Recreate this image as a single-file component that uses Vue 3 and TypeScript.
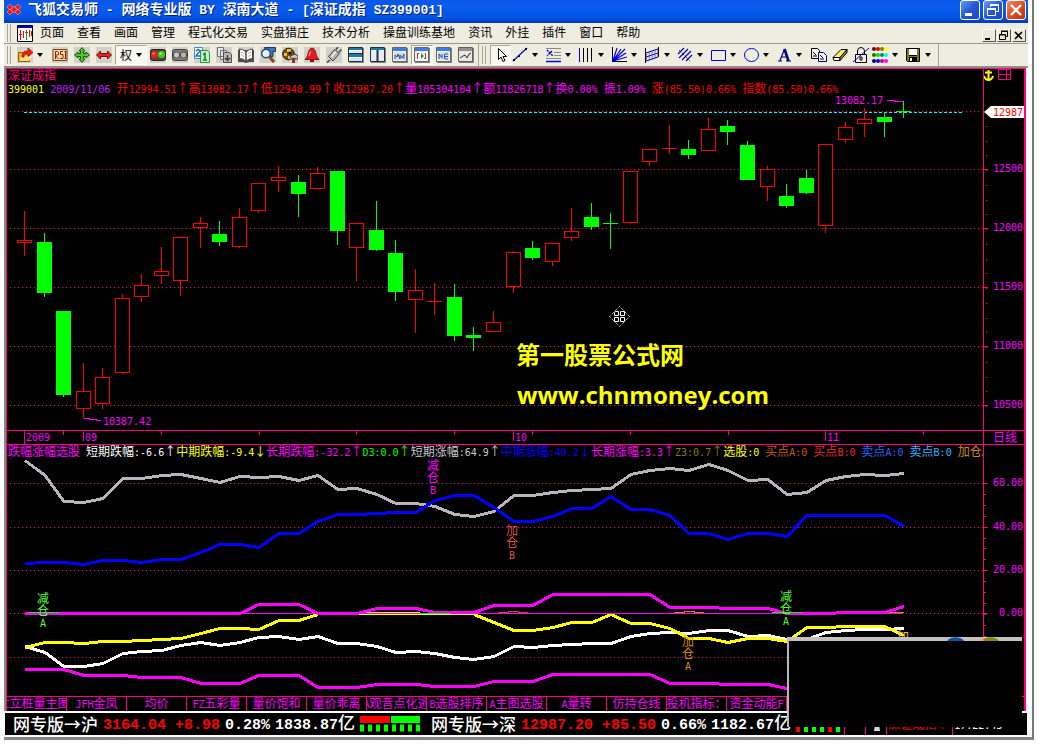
<script setup lang="ts">
import { computed, h } from 'vue'

interface Piece { text: string; color: string }
interface Candle { up: boolean; top: number; bottom: number; high: number; low: number }
interface Tool { icon: string; label: string; caret?: boolean; on?: boolean; text?: string }

/* Splits a string into Latin and Han runs so that each run gets its own font. */
const split = (s: string): string[] => s.match(/[\x20-\x7e]+|[^\x20-\x7e]+/g) ?? []
const Mix = (props: { t: string; svg?: boolean }) =>
  split(props.t).map((r) => h(props.svg ? 'tspan' : 'span', { class: /^[\x20-\x7e]/.test(r) ? 'lat' : 'han' }, r))
Mix.props = { t: String, svg: Boolean }

const menus = ['页面', '查看', '画面', '管理', '程式化交易', '实盘猎庄', '技术分析', '操盘训练基地', '资讯', '外挂', '插件', '窗口', '帮助']

const bg = '<path fill="#d3d1c9" d="M0 0h16v16H0z"/>'
const win = '<path fill="#808080" d="M1 1h15v15H1z"/><path fill="#f4f4ee" stroke="#666" d="M.5.5h14v14H.5z"/><path fill="#3a7bf0" d="M1 1h13v3H1z"/><path fill="#dcdcdc" d="M2 5h11v8H2z"/>'
const icons: Record<string, string> = {
  open: bg + '<path fill="#ffb020" stroke="#a05000" d="M1.500 14.500v-9h4l1 1h6v8z"/><path fill="#ffe080" d="M2 14l3-5h10l-3 5z"/><path fill="#f02010" stroke="#801000" stroke-width=".7" d="M5 10c0-5 2-6 6-6V1l5 4.500-5 4V7c-3 0-4 0-4 3z"/>',
  rsi: bg + '<path fill="#f6d9b4" stroke="#8a3c10" d="M1 2.500h14v11H1z"/><path fill="none" stroke="#7a2800" d="M3.500 12V4.500h2l1 1v2l-3 1 3 3.500M11 4.500H8.500v3H11v4H8M12.500 4.500h2m-1 0v7m-1 0h2"/>',
  move: bg + '<path fill="#50c828" stroke="#145008" d="M8 .6l3 3.400H9.500v2.500H12V5l3.500 3-3.500 3V9.500H9.500V12H11l-3 3.500L5 12h1.500V9.500H4V11L.5 8 4 5v1.500h2.500V4H5z"/>',
  wide: bg + '<path fill="#f02010" stroke="#701008" d="M.5 8l4-4v2.500h7V4l4 4-4 4V9.500h-7V12z"/>',
  light: bg + '<rect x=".5" y="2.500" width="15" height="11" rx="2" fill="#504838" stroke="#28201c"/><circle cx="4.500" cy="7.500" r="3.500" fill="#e82020"/><circle cx="11.500" cy="7.500" r="3.500" fill="#40d020"/><circle cx="3.500" cy="6.500" r="1" fill="#ffa0a0"/><circle cx="10.500" cy="6.500" r="1" fill="#c8ffb0"/>',
  dark: bg + '<rect x=".5" y="2.500" width="15" height="11" rx="2" fill="#808080" stroke="#404040"/><circle cx="4.500" cy="8" r="3.200" fill="#c4c4c4" stroke="#484848"/><circle cx="11.500" cy="8" r="3.200" fill="#b4b4b4" stroke="#484848"/>',
  pages: bg + '<path fill="#fff" stroke="#3890d8" d="M.5.5h8v11h-8z"/><path fill="none" stroke="#1870c8" stroke-width="1.500" d="M2 4l2-1.500L6 4 2 9h4"/><path fill="#c8f0c0" stroke="#209848" d="M6.500 3.500h7l2 2v10h-9z"/><path stroke="#108038" stroke-width="1.500" fill="none" d="M9 7.500l2-1v6M9 13h4"/>',
  stack: bg + '<path fill="#e8e8e8" stroke="#707070" d="M1.500.5h6v9h-6zM4.500 3.500h6v9h-6z"/><path fill="#b8b8b8" stroke="#505050" d="M7.500 5.500h6l2 2v8h-8z"/><path fill="none" stroke="#404040" stroke-width="1.500" d="M11.500 8v5M9 11l2.500 2.500L14 11"/>',
  book: bg + '<path fill="#505050" d="M0 3v12h5l3 1 3-1h5V3z"/><path fill="#fff" stroke="#484848" d="M1.500 2l3 .5L8 5v9l-3.500-2-3-.5zM14.500 2l-3 .5L8 5v9l3.500-2 3-.5z"/><path stroke="#b0b0b0" d="M3 5l3 1.500M3 8l3 1.500M13 5l-3 1.500M13 8l-3 1.500"/>',
  find: bg + '<path fill="#3878c8" stroke="#183860" d="M4.500.5h11v4H13v5H8z"/><circle cx="6" cy="6.500" r="4.300" fill="#dff4ff" stroke="#28485c" stroke-width="1.400"/><path stroke="#8c4818" stroke-width="3" d="M9.500 10l4.500 5"/>',
  camera: bg + '<circle cx="6.500" cy="7" r="5.800" fill="#70501c" stroke="#281400"/><path fill="#e8c038" d="M5 2h4v3H5zM2 6h3v3H2zM6 9h4v3H6z"/><circle cx="8" cy="6" r="1.500" fill="#201000"/><path fill="#c8c8c8" stroke="#404040" d="M8 9l5-2 3 2v3h-3v-1l-3 1z"/><path fill="#a02818" d="M10 12h3v4h-3z"/>',
  bell: bg + '<path fill="#e81c1c" stroke="#801010" d="M8 1c4 1 3.500 6 5 9l2 2.500H1L3 10C4.500 7 4 2 8 1z"/><path fill="#801010" d="M6 13h4v2H6z"/><path stroke="#ff9090" stroke-width="1.300" d="M6.500 4L5 9"/>',
  plug: bg + '<path fill="#b4b4b4" stroke="#404040" d="M2.500 9.500l6-7 5 4-6.500 7.500z"/><path fill="#e8e8e8" d="M5 9l4-5 1.500 1L6 11z"/><path stroke="#404040" stroke-width="1.500" d="M10 2.500L12 0M13 5l2.500-2.500M4 13l-3 2.500" fill="none"/>',
  rows: '<path fill="#888" d="M1 1h15v15H1z"/><path fill="#fff" stroke="#203040" d="M.5.5h14v14H.5z"/><path fill="#2078a0" d="M1 1h13v2H1zM1 7h13v3H1z"/><path stroke="#203040" d="M1 6.500h13"/><path fill="#d0e8f0" d="M2 4h11v2H2zM2 11h11v3H2z"/>',
  cols: '<path fill="#888" d="M1 1h15v15H1z"/><path fill="#e4eef2" stroke="#203040" d="M.5.5h14v14H.5z"/><path fill="#2078a0" d="M1 1h13v2H1z"/><path stroke="#203040" stroke-width="2" d="M7.500 3v11"/>',
  win1: win + '<path fill="none" stroke="#1858b0" d="M3 12V8l2 2 1-3 2 5V8l2 3 2-4v5"/>',
  win2: win + '<path fill="#fff" d="M2 5h11v8H2z"/><path fill="none" stroke="#e02020" d="M3.500 6v6M11.500 6v6M5 6.500H3M10 11.500h2"/><path fill="#20a020" d="M7 6l3 3-3 3z"/>',
  win3: win + '<path fill="none" stroke="#1858b0" d="M3 12V7l3 4V7M9 7h3M9 9.500h3M9 12h3M8.500 7v5"/>',
  win4: '<path fill="#808080" d="M1 1h15v15H1z"/><path fill="#e8e8e0" stroke="#606060" d="M.5.5h14v14H.5z"/><path fill="#909090" d="M1 1h13v3H1z"/><path fill="none" stroke="#303030" d="M2 11l3-2 2-1 2 3 2-4 2-1"/>',
  arrow: '<path fill="#fff" stroke="#000" d="M5.500 1.500v11l2.500-2.500 2 4.500 2-1-2-4h3.500z"/>',
  line: '<path stroke="#0000e0" stroke-width="1.200" d="M1 14L15 1"/><path d="M1 12h2v2H1zM6 8h2v2H6zM13 1h2v2h-2z"/>',
  fib: '<path stroke="#0000e0" stroke-width="1.500" d="M1 14.500h15"/><path stroke="#888" d="M1 1.500h15M9 5.500h7M9 8.500h7M1 11.500h15"/><path stroke="#0000e0" stroke-width="1.500" stroke-dasharray="2 1" d="M2 3l6 6M7 4L2 9"/>',
  bars: '<path stroke="#0000e0" d="M1.500 1v14"/><path stroke="#000" d="M5.500 1v14M9.500 1v14M13.500 1v14"/>',
  fan: '<path stroke="#000" d="M1.500 0v15M1 14.500h15" /><path stroke="#0000e0" stroke-width="1.200" d="M2 14L6 1M2 14l8-12M2 14L14 2M2 14l13-8M2 14l14-4"/><path fill="#0000a0" d="M1 10l5 5H1z"/>',
  chan: '<path stroke="#000" d="M1.500 1v15M14.500 0v10"/><path stroke="#0000c0" stroke-width="1.200" d="M2 6l12-4M2 10l12-4M2 14l12-4"/><path stroke="#000" stroke-dasharray="1 2" d="M2 8l12-4M2 12l12-4"/>',
  hatch: '<path stroke="#0000c0" stroke-width="1.200" d="M1 7l6-6M2 11l9-9M5 13l9-9M9 14l6-6"/><path stroke="#000" d="M2 3l11 11" stroke-dasharray="1 1"/>',
  rect: '<path fill="none" stroke="#0000e0" d="M1.500 3.500h14v10h-14z"/>',
  oval: '<ellipse cx="8.500" cy="8" rx="7" ry="6.500" fill="none" stroke="#0000e0"/>',
  font: '<path fill="none" stroke="#000080" stroke-width="1.200" d="M2 14h4M10 14h5M4 13.500L8.500 2M5.500 10h5"/><path stroke="#000080" stroke-width="2.600" d="M8.500 2L12.500 14"/>',
  copy: '<path fill="#f4f2e4" stroke="#000" d="M.5 1.500h6l2 2v8h-8z"/><path fill="#f4f2e4" stroke="#000080" d="M7.500 5.500h5l3 3v6h-8z"/><path stroke="#000" d="M2 5l3 3M2 9h4M9 8l3 3M9 12h4"/>',
  erase: '<path fill="#f4f060" stroke="#000" d="M1 10.500L9 2.500h6l-7 8z"/><path fill="#fff" stroke="#000" d="M1 10.500h7v3H2z"/><path fill="#a09020" stroke="#000" d="M8 10.500l7-8v3l-7 8z"/>',
  lock: '<path fill="none" stroke="#000" d="M4.500 7V4a3.500 3.500 0 0 1 7 0v3M2.500 7.500h11v8h-11zM7 10h2v3H7z"/><path stroke="#0000c0" d="M0 15L16 1"/>',
  colors: [['#800000', '#e00000', '#808000', '#ffff00'], ['#008000', '#00e000', '#008080', '#00ffff'], ['#000080', '#0000ff', '#c00080', '#ff00ff']]
    .map((row, y) => row.map((c, x) => `<circle cx="${2 + x * 4}" cy="${2 + y * 6}" r="2" fill="${c}"/>`).join('')).join(''),
  save: '<path fill="#808000" stroke="#000" d="M1.500 1.500h13v13h-12l-1-1z"/><path fill="#fff" d="M4 2h8v6H4z"/><path d="M4 10h8v5H4z"/><path fill="#fff" d="M5 11h2v3H5z"/><path stroke="#000" d="M4 8.500h8"/>',
}

const mainTools: Tool[] = [
  { icon: 'open', label: '打开', caret: true }, { icon: 'rsi', label: '指标' }, { icon: 'move', label: '移动' }, { icon: 'wide', label: '伸缩' },
  { icon: '', label: '复权', text: '权', caret: true, on: true }, { icon: 'light', label: '红绿灯' }, { icon: 'dark', label: '停用' },
  { icon: 'pages', label: '翻页' }, { icon: 'stack', label: '叠加' }, { icon: 'book', label: '资料' }, { icon: 'find', label: '查找' },
  { icon: 'camera', label: '选股' }, { icon: 'bell', label: '预警' }, { icon: 'plug', label: '连接' }, { icon: 'rows', label: '横排' },
  { icon: 'cols', label: '竖排' }, { icon: 'win1', label: '分时' }, { icon: 'win2', label: '日线图', on: true }, { icon: 'win3', label: '报价' }, { icon: 'win4', label: '走势' },
]
const drawTools: Tool[] = [
  { icon: 'arrow', label: '选择', on: true }, { icon: 'line', label: '线段', caret: true }, { icon: 'fib', label: '黄金分割', caret: true },
  { icon: 'bars', label: '周期线', caret: true }, { icon: 'fan', label: '扇形线', caret: true }, { icon: 'chan', label: '通道', caret: true },
  { icon: 'hatch', label: '平行线', caret: true }, { icon: 'rect', label: '矩形', caret: true }, { icon: 'oval', label: '椭圆', caret: true },
  { icon: 'font', label: '文字', caret: true }, { icon: 'copy', label: '复制' }, { icon: 'erase', label: '擦除' }, { icon: 'lock', label: '锁定' },
  { icon: 'colors', label: '颜色', caret: true }, { icon: 'save', label: '保存', caret: true },
]

const quote: Piece[] = [
  { text: '399001 ', color: '#ff0' }, { text: '2009/11/06 ', color: '#c81eff' },
  { text: '开12994.51↑高13082.17↑低12940.99↑收12987.20↑', color: '#f00' },
  { text: '量105304104↑额11826718↑换0.00% 振1.09% ', color: '#f0f' },
  { text: '涨(85.50)0.66% 指数(85.50)0.66%', color: '#f00' },
]
const readout: Piece[] = [
  { text: '跌幅涨幅选股 ', color: '#f0f' }, { text: '短期跌幅:-6.6↑', color: '#fff' }, { text: '中期跌幅:-9.4↓', color: '#ff0' },
  { text: '长期跌幅:-32.2↑', color: '#f0f' }, { text: 'D3:0.0↑', color: '#0f0' }, { text: '短期涨幅:64.9↑', color: '#c8c8d0' },
  { text: '中期涨幅:40.2↓', color: '#00f' }, { text: '长期涨幅:3.3↑', color: '#f0f' }, { text: 'Z3:0.7↑', color: '#8a7a10' },
  { text: '选股:0 ', color: '#ff0' }, { text: '买点A:0 ', color: '#c85a14' }, { text: '买点B:0 ', color: '#f02828' },
  { text: '卖点A:0 ', color: '#2864ff' }, { text: '卖点B:0 ', color: '#32b4ff' }, { text: '加仓A:0', color: '#d28c0a' },
]

const raw: [number, number, number, number, number][] = [
  [1, 240, 243, 211, 256], [0, 242, 293, 233, 297], [0, 311, 395, 311, 397], [1, 391, 409, 363, 418], [1, 377, 404, 368, 409],
  [1, 298, 373, 294, 374], [1, 285, 297, 274, 302], [1, 271, 276, 247, 284], [1, 237, 281, 237, 296], [1, 223, 228, 217, 248],
  [0, 234, 242, 221, 246], [1, 217, 247, 208, 248], [1, 183, 211, 183, 213], [1, 177, 181, 166, 192], [0, 182, 194, 175, 217],
  [1, 173, 189, 167, 189], [0, 171, 231, 171, 245], [1, 223, 248, 223, 281], [0, 230, 250, 201, 251], [0, 253, 292, 240, 301],
  [1, 290, 300, 269, 333], [1, 301, 301, 283, 315], [0, 297, 336, 284, 341], [0, 335, 338, 327, 351], [1, 322, 332, 311, 332],
  [1, 252, 287, 251, 293], [0, 248, 258, 241, 260], [1, 243, 262, 243, 266], [1, 231, 238, 208, 241], [0, 217, 227, 203, 230],
  [0, 223, 224, 213, 249], [1, 171, 223, 171, 224], [1, 149, 162, 149, 166], [1, 148, 148, 125, 154], [0, 149, 155, 140, 159],
  [1, 129, 151, 118, 151], [0, 126, 132, 120, 145], [0, 145, 180, 141, 180], [1, 169, 187, 166, 201], [0, 196, 206, 184, 208],
  [0, 178, 193, 170, 194], [1, 144, 226, 144, 233], [1, 127, 140, 122, 143], [1, 119, 124, 108, 137], [0, 117, 122, 113, 137],
  [0, 111, 112, 101, 118],
]
const candles: Candle[] = raw.map(([up, top, bottom, high, low]) => ({ up: up === 1, top, bottom, high, low }))
const cx = (i: number): number => Math.round(24 + i * 19.54)

const series: { color: string; ys: number[] }[] = [
  { color: '#b9b4bb', ys: [460, 475, 501, 502, 498, 478, 478, 475, 474, 478, 482, 476, 477, 476, 480, 475, 489, 488, 494, 503, 503, 506, 514, 516, 511, 495, 495, 492, 490, 489, 488, 474, 470, 468, 470, 464, 470, 480, 479, 494, 492, 480, 476, 474, 475, 473] },
  { color: '#00f', ys: [563, 562, 562, 564, 560, 560, 562, 559, 559, 552, 544, 544, 547, 533, 533, 521, 514, 514, 513, 512, 512, 500, 495, 495, 507, 521, 521, 516, 508, 508, 496, 509, 509, 515, 533, 533, 539, 533, 533, 536, 515, 515, 515, 515, 515, 526] },
  { color: '#fff', ys: [646, 652, 666, 666, 663, 653, 651, 650, 645, 642, 645, 642, 637, 636, 639, 636, 643, 643, 646, 652, 651, 653, 657, 659, 656, 646, 647, 645, 644, 643, 643, 636, 633, 632, 633, 630, 630, 636, 635, 639, 639, 632, 630, 629, 629, 628] },
  { color: '#ff0', ys: [647, 642, 642, 643, 641, 641, 640, 639, 638, 633, 628, 628, 629, 620, 620, 614] },
  { color: '#ff0', ys: [614, 622, 630, 630, 627, 622, 622, 614, 623, 623, 628, 638, 638, 642, 638, 638, 641, 627, 627, 626, 626, 626, 635] },
  { color: '#f0f', ys: [613, 613, 613, 613, 613, 613, 613, 613, 613, 613, 613, 613, 604, 604, 604, 613, 613, 613, 608, 608, 608, 612, 612, 612, 605, 605, 605, 594, 594, 594, 594, 594, 594, 607, 607, 607, 608, 608, 608, 613, 613, 613, 612, 612, 612, 606] },
  { color: '#f0f', ys: [669, 669, 669, 675, 675, 675, 677, 677, 677, 683, 683, 683, 675, 675, 675, 687, 687, 687, 684, 684, 684, 686, 686, 686, 681, 681, 681, 674, 674, 674, 674, 674, 674, 683, 683, 683, 684, 684, 684, 688, 688] },
]
/* A series of 23 values belongs to the second half of the period. */
const lines = computed(() => series.map((s) => {
  const first = s.ys.length === 23 ? 23 : 0
  return { color: s.color, points: s.ys.map((y, i) => `${cx(first + i) + 1},${y + 0.5}`).join(' ') }
}))

const priceMarks = [12500, 12000, 11500, 11000, 10500].map((value, i) => ({ value, y: 169 + i * 59 }))
const levelMarks = [{ t: '60.00', y: 483 }, { t: '40.00', y: 527 }, { t: '20.00', y: 570 }, { t: ' 0.00', y: 613 }]
const minor = Array.from({ length: 21 }, (_, i) => 111 + Math.round(i * 14.75))
const minorLevels = Array.from({ length: 20 }, (_, i) => 483 + Math.round(i * 10.9))
const ticks = [[24, 13], [63, 4], [83, 10], [161, 4], [259, 4], [356, 4], [454, 4], [513, 10], [532, 4], [630, 4], [728, 4], [825, 10], [923, 4]]
const dates = [{ x: 26, t: '2009' }, { x: 85, t: '09' }, { x: 515, t: '10' }, { x: 827, t: '11' }]
const signals = [
  { x: 43, y: 603, chars: ['减', '仓', 'A'], color: '#5f3' }, { x: 433, y: 470, chars: ['减', '仓', 'B'], color: '#f0f' },
  { x: 512, y: 535, chars: ['加', '仓', 'B'], color: '#dc5050' }, { x: 688, y: 646, chars: ['加', '仓', 'A'], color: '#d28c0a' },
  { x: 786, y: 601, chars: ['减', '仓', 'A'], color: '#5f3' }, { x: 903, y: 641, chars: ['加'], color: '#e8c060' },
]
const tabs = ['C立桩量主图', 'JFH金凤', '均价', 'FZ五彩量', '量价饱和', '量价乖离', 'A观音点化逃', 'B选股排序', 'A主图选股', 'A量转', '仿持仓线', '投机指标：', '资金动能F']
const lamps = ['#f00', '#0f0', '#0f0', '#0f0', '#f00', '#0f0']
</script>

<template>
  <div class="frame">
    <main class="window">
      <header class="title">
        <svg class="logo" width="16" height="14" viewBox="0 0 16 14" aria-hidden="true">
          <path fill="#f01818" stroke="#ffb0a0" stroke-width=".5" d="M4 1l3 3-3 3-3-3zM12 1l3 3-3 3-3-3zM4 6l3 3-3 3-3-3zM12 6l3 3-3 3-3-3zM8 3l3 3.500L8 10 5 6.500z" />
        </svg>
        <h1><Mix t="飞狐交易师 - 网络专业版 BY 深南大道 - [深证成指 SZ399001]" /></h1>
        <div class="caption">
          <button aria-label="最小化"><svg width="18" height="18"><path fill="#fff" d="M4 12h7v3H4z" /></svg></button>
          <button aria-label="还原"><svg width="18" height="18"><path fill="none" stroke="#fff" d="M6.500 6V3.500h8v7H12" /><path stroke="#fff" stroke-width="2" d="M6 4h9M3 8h9" /><path fill="none" stroke="#fff" d="M3.500 8v6.500h8V8" /></svg></button>
          <button class="close" aria-label="关闭"><svg width="18" height="18"><path stroke="#fff" stroke-width="2.400" d="M4 4l10 10M14 4L4 14" /></svg></button>
        </div>
      </header>

      <nav class="menu">
        <i class="grip"></i>
        <svg class="doc" width="16" height="17" viewBox="0 0 16 17" aria-hidden="true">
          <path fill="#fff" stroke="#000" d="M.5.5h15v16H.5z" /><path fill="#0000c8" d="M1 1h14v2H1z" />
          <path fill="none" stroke="#f00" d="M3.500 5v10M2 9.500h3M6.500 6v7M12.500 5v7M14.500 6v5" /><path stroke="#00a000" d="M9.500 5v10M8 7.500h3" />
        </svg>
        <a v-for="m in menus" :key="m" href="#">{{ m }}</a>
        <div class="mdi">
          <button aria-label="最小化子窗口"><svg width="11" height="11"><path d="M2 8h5v2H2z" /></svg></button>
          <button aria-label="还原子窗口"><svg width="11" height="11"><path fill="none" stroke="#000" d="M3.500 4V1.500h6v5H8M1.500 4.500h6v5h-6zM3 1h7M1 5h7" /></svg></button>
          <button aria-label="关闭子窗口"><svg width="11" height="11"><path stroke="#000" stroke-width="1.600" d="M2 2l7 7M9 2L2 9" /></svg></button>
        </div>
      </nav>

      <div class="toolbar">
        <i class="grip"></i>
        <button v-for="t in mainTools" :key="t.label" :class="{ on: t.on, wide: t.caret && !t.text, word: t.text }" :aria-label="t.label">
          <span v-if="t.text">{{ t.text }}</span>
          <svg v-else width="16" height="16" viewBox="0 0 16 16" v-html="icons[t.icon]"></svg>
          <i v-if="t.caret" class="caret"></i>
        </button>
        <i class="rule"></i>
        <i class="grip"></i>
        <button v-for="t in drawTools" :key="t.label" class="draw" :class="{ on: t.on, drop: t.caret }" :aria-label="t.label">
          <svg width="16" height="16" viewBox="0 0 16 16" v-html="icons[t.icon]"></svg>
          <i v-if="t.caret" class="caret"></i>
        </button>
        <i class="rule"></i>
      </div>

      <div class="work">
        <section class="panel">
          <div class="plot">
            <h2>深证成指</h2>
            <p class="values quote"><span v-for="(q, i) in quote" :key="i" :style="{ color: q.color }"><Mix :t="q.text" /></span></p>
            <svg class="chart" viewBox="7 96 976 334">
              <g class="crisp">
                <path class="grid" d="M10 111.500H981" />
                <path v-for="m in priceMarks" :key="m.value" class="grid" :d="`M10 ${m.y + 0.5}H983`" />
                <path class="last" d="M24 112.500H962" />
                <g v-for="(c, i) in candles" :key="i" :class="c.up ? 'rise' : 'fall'">
                  <path :d="`M${cx(i) + 0.5} ${c.high}V${c.top}M${cx(i) + 0.5} ${c.bottom}V${c.low}`" />
                  <path v-if="c.up && c.top === c.bottom" :d="`M${cx(i) - 7} ${c.top + 0.5}h15`" />
                  <rect v-else-if="c.up" :x="cx(i) - 6.5" :y="c.top + 0.5" width="14" :height="c.bottom - c.top - 1" />
                  <rect v-else :x="cx(i) - 7" :y="c.top" width="15" :height="c.bottom - c.top" stroke="none" />
                </g>
                <path class="lead" d="M84 418.500h4l3 1h4l3 1h3M887 100.500h7v1h9" />
              </g>
              <text class="mag" x="103" y="425"><Mix t="10387.42" svg /></text>
              <text class="mag" x="835" y="104"><Mix t="13082.17" svg /></text>
              <g fill="none" stroke="#fff">
                <path stroke-dasharray="1 1" d="M619.500 306.500l10 10-10 10-10-10z" />
                <path d="M615.500 311.500h3v4h-4v-3zM621.500 311.500h3v4h-4v-4zM614.500 317.500h4v4h-4zM620.500 317.500h4v4h-4z" />
              </g>
              <text class="brand" x="516" y="364">第一股票公式网</text>
              <text class="brand site" x="517" y="404">www.chnmoney.com</text>
            </svg>
          </div>
          <div class="axis">
            <svg viewBox="984 69 40 361">
              <path fill="none" stroke="#ff0" stroke-width="2" d="M988.500 70v10M985 72.500h7M984 76c1 3 2 4 4.500 4s3.500-1 4.500-4" />
              <path fill="none" stroke="#ff0080" d="M998.500 69.500h12v10h-12zM998.500 74.500h12M1006.500 69.500v10" />
              <g class="crisp pink"><path v-for="y in minor" :key="y" :d="`M986 ${y + 0.5}h1`" /><path v-for="m in priceMarks" :key="m.y" :d="`M984 ${m.y + 0.5}h4`" /></g>
              <path fill="#fff" d="M984 112l7-6h33v12h-33z" />
              <text class="now" x="993" y="116"><Mix t="12987" svg /></text>
              <text v-for="m in priceMarks" :key="m.value" class="mag" x="993" :y="m.y + 3"><Mix :t="String(m.value)" svg /></text>
            </svg>
          </div>
        </section>

        <section class="panel times">
          <svg class="chart" viewBox="7 431 976 13">
            <path v-for="t in ticks" :key="t[0]" class="crisp pink" :d="`M${t[0] + 0.5} 431v${t[1]}`" />
            <text v-for="d in dates" :key="d.t" class="mag" :x="d.x" y="441"><Mix :t="d.t" svg /></text>
          </svg>
          <div class="axis period">日线</div>
        </section>

        <section class="panel lower">
          <div class="plot">
            <p class="values"><span v-for="(q, i) in readout" :key="i" :style="{ color: q.color }"><Mix :t="q.text" /></span></p>
            <svg class="chart" viewBox="7 458 976 238">
              <g class="crisp">
                <path v-for="y in [483, 527, 570, 613, 657]" :key="y" class="grid" :d="`M10 ${y + 0.5}H983`" />
                <polyline v-for="(l, i) in lines" :key="i" fill="none" stroke-width="3" :stroke="l.color" :points="l.points" />
                <path stroke="#f0f" d="M24 613.500H903" />
                <path stroke="#ff0" d="M366 612.500h54M359 614.500h117" />
                <path stroke="#0f0" d="M29 612.500h30M420 613.500h30M772 612.500h30" />
                <path stroke="#c84a3c" fill="none" d="M498 612.500h10v-1h10v1h10" />
                <path stroke="#d28c0a" d="M674 612.500h10v-1h10v1h10M889 612.500h14v-1" fill="none" />
              </g>
              <g v-for="s in signals" :key="s.x" class="signal" :fill="s.color">
                <text v-for="(c, i) in s.chars" :key="i" :x="s.x" :y="s.y + i * 12"><Mix :t="c" svg /></text>
              </g>
            </svg>
          </div>
          <div class="axis">
            <svg viewBox="984 445 40 251">
              <g class="crisp pink"><path v-for="y in minorLevels" :key="y" :d="`M984 ${y + 0.5}h2`" /><path v-for="m in levelMarks" :key="m.y" :d="`M984 ${m.y + 0.5}h4`" /></g>
              <text v-for="m in levelMarks" :key="m.t" class="mag" text-anchor="end" x="1023" :y="m.y + 3"><Mix :t="m.t" svg /></text>
            </svg>
          </div>
        </section>

        <div class="tabs"><button v-for="t in tabs" :key="t"><span><Mix :t="t" /></span></button></div>
      </div>

      <footer class="status">
        <b>网专版→沪</b><b class="hot"><Mix t="3164.04 +8.98" /></b><b><Mix t="0.28%" /></b><b><Mix t="1838.87亿" /></b>
        <svg class="meter" width="60" height="16"><path fill="#f00" d="M0 0h30v7H0z" /><path fill="#0f0" d="M31 0h29v7H31z" /><path stroke="#0f0" stroke-width="7" stroke-dasharray="4 4" d="M0 12h60" /></svg>
        <b>网专版→深</b><b class="hot"><Mix t="12987.20 +85.50" /></b><b><Mix t="0.66%" /></b><b><Mix t="1182.67亿" /></b>
        <div class="tray">
          <span class="lamps"><i v-for="(c, i) in lamps" :key="i" :style="{ background: c }"></i></span>
          <span class="cell"></span>
          <span class="cell"><svg width="8" height="16"><circle cx="4" cy="5" r="3" fill="#ccc" /><path fill="#d8d8e8" d="M1 15l1-6h4l1 6z" /></svg></span>
          <span class="cell name">深证成指↑</span>
          <span class="cell"><Mix t="17:22:43" /></span>
        </div>
      </footer>

      <aside class="popup">
        <svg width="80" height="4" viewBox="0 0 80 4" aria-hidden="true"><path fill="#0858a0" d="M5 4c3-5 14-5 17 0z" /><path fill="#8a8a00" d="M40 4c3-5 14-5 17 0z" /><path fill="#ff9000" d="M39 4l3-3v3z" /></svg>
      </aside>
    </main>
  </div>
</template>

<style>
body { margin: 0; background: #fdfdfd; }
</style>

<style scoped>
.frame { margin: 0 5px 0 4px; padding-right: 4px; border-right: 2px solid #777; border-bottom: 3px solid #858585; background: #fff; }
.window { position: relative; font: 12px/14px "Noto Sans CJK SC", sans-serif; color: #000; }
.window :deep(.lat) { font-family: "DejaVu Sans Mono", monospace; font-size: 10px; white-space: pre; }
button { margin: 0; padding: 0; border: 0; background: none; font: inherit; color: inherit; }
h1, h2, p { margin: 0; font: inherit; }
svg { display: block; }
.crisp { shape-rendering: crispEdges; }

.title { display: flex; align-items: center; height: 23px; background: linear-gradient(#0a56e6, #0a5cf0 30%, #0055e5 75%, #0038b8); color: #fff; }
.logo { margin: 0 6px 3px 2px; }
.title h1 { flex: 1; min-width: 0; height: 20px; margin-bottom: 5px; font-size: 14px; line-height: 19px; font-weight: 700; white-space: nowrap; text-shadow: 1px 1px #002080; }
.title h1 :deep(.lat) { font-family: "Liberation Mono", monospace; font-size: 13px; }
.caption { display: flex; gap: 3px; padding-right: 2px; align-self: flex-start; }
.caption button { width: 20px; height: 20px; box-sizing: border-box; border: 1px solid #fff; border-radius: 3px; background: linear-gradient(135deg, #6b9cf8, #2458d8 50%, #1c48c8); }
.caption .close { background: linear-gradient(135deg, #f09070, #e04c20 50%, #c03010); }

.menu, .toolbar { display: flex; align-items: center; background: #efede0; }
.menu { height: 20px; border-bottom: 1px solid #9c9a8c; }
.menu a { margin: 0 13px 2px 0; color: #000; text-decoration: none; white-space: nowrap; line-height: 18px; }
.doc { margin: 0 7px 0 2px; }
.grip { flex: none; width: 2px; height: 18px; margin-left: 3px; margin-right: 4px; border-left: 1px solid #a8a698; border-right: 1px solid #a8a698; }
.mdi { display: flex; gap: 1px; margin-left: auto; padding-right: 2px; padding-top: 5px; }
.mdi button { width: 14px; height: 13px; box-sizing: border-box; border: 1px solid #fff; border-right-color: #555; border-bottom-color: #555; background: #ece9d8; }

.toolbar { height: 22px; }
.toolbar button { flex: none; display: flex; align-items: center; justify-content: center; box-sizing: border-box; width: 22px; height: 20px; }
.toolbar .wide { width: 34px; justify-content: flex-start; padding-left: 2px; }
.toolbar .draw { width: 21px; }
.toolbar .drop { width: 33px; justify-content: flex-start; padding-left: 1px; }
.toolbar .word { width: 32px; }
.toolbar .on { border: 1px solid #a8a698; border-right-color: #fff; border-bottom-color: #fff; background: #f8f7f0; }
.caret { width: 0; margin-left: 4px; border: 3px solid transparent; border-top: 4px solid #000; border-bottom: 0; }
.rule { width: 1px; height: 22px; margin-left: 1px; background: #a8a698; }

.work { border: solid #ff0080; border-width: 1px 2px 0 1px; background: #000; box-shadow: -2px 0 #8a8a8a; margin: 2px 2px 0; position: relative; }
.work::before { content: ""; position: absolute; left: -3px; right: -4px; top: -3px; height: 2px; background: #909088; }
.panel { display: grid; grid-template-columns: minmax(0, 1fr) 41px; border-bottom: 1px solid #ff0080; }
.plot { min-width: 0; }
.axis { border-left: 1px solid #ff0080; }
.axis svg, .chart { width: 100%; }
h2 { height: 13px; line-height: 11px; padding-left: 1px; color: #ff0080; }
.values { height: 13px; line-height: 11px; padding-left: 1px; overflow-x: clip; white-space: nowrap; }
.quote { height: 14px; }
.grid { stroke: #ff0080; stroke-dasharray: 1 3; }
.last { stroke: #0ff; stroke-dasharray: 3 2; }
.pink { stroke: #ff0080; }
.lead { fill: none; stroke: #f0f; }
.rise { stroke: #f00; fill: #000; }
.fall { stroke: #0f0; fill: #0f0; }
.mag { fill: #f0f; }
.now { fill: #f00; }
.brand { fill: #ff0; font-size: 24px; font-weight: 700; }
.site { font-family: "Open Sans", sans-serif; }
.signal text { text-anchor: middle; }
.period { color: #f0f; padding-left: 9px; line-height: 11px; height: 13px; }

.tabs { display: flex; height: 14px; overflow-x: clip; color: #f0f; }
.tabs button { flex: none; display: flex; justify-content: center; box-sizing: border-box; width: 60px; height: 14px; border-right: 1px solid #ff0080; overflow-x: clip; white-space: nowrap; line-height: 11px; }

.status { display: flex; align-items: center; height: 22px; padding-left: 8px; border: solid #fff; border-width: 2px 1px; background: #000; color: #fff; white-space: nowrap; overflow: hidden; }
.status b { flex: none; font-size: 17px; line-height: 20px; font-weight: 500; margin-right: 5px; }
.status b :deep(.han) { font-size: 17px; }
.status b :deep(.lat) { font-family: "Liberation Mono", monospace; font-size: 15px; font-weight: 700; }
.status .hot { color: #f00; }
.meter { margin-right: 11px; }
.tray { display: flex; flex: none; height: 22px; }
.lamps { display: flex; gap: 4px; align-items: flex-end; padding-bottom: 3px; box-sizing: border-box; height: 22px; margin-right: 4px; }
.lamps i { width: 4px; height: 5px; }
.cell { min-width: 21px; padding: 3px 0 0 1px; box-sizing: border-box; height: 22px; border-left: 1px solid #ff0080; line-height: 16px; }
.cell svg { margin: 0 auto; }
.name { color: #f00; width: 66px; }

.popup { position: absolute; right: 6px; bottom: 10px; width: 235px; height: 90px; box-sizing: border-box; border: 0 solid #b8b4bc; border-top: 4px solid #c4c0c0; border-left: 2px solid #b8b4c0; background: #000; }
.popup svg { position: absolute; top: -4px; right: 0; }
</style>
